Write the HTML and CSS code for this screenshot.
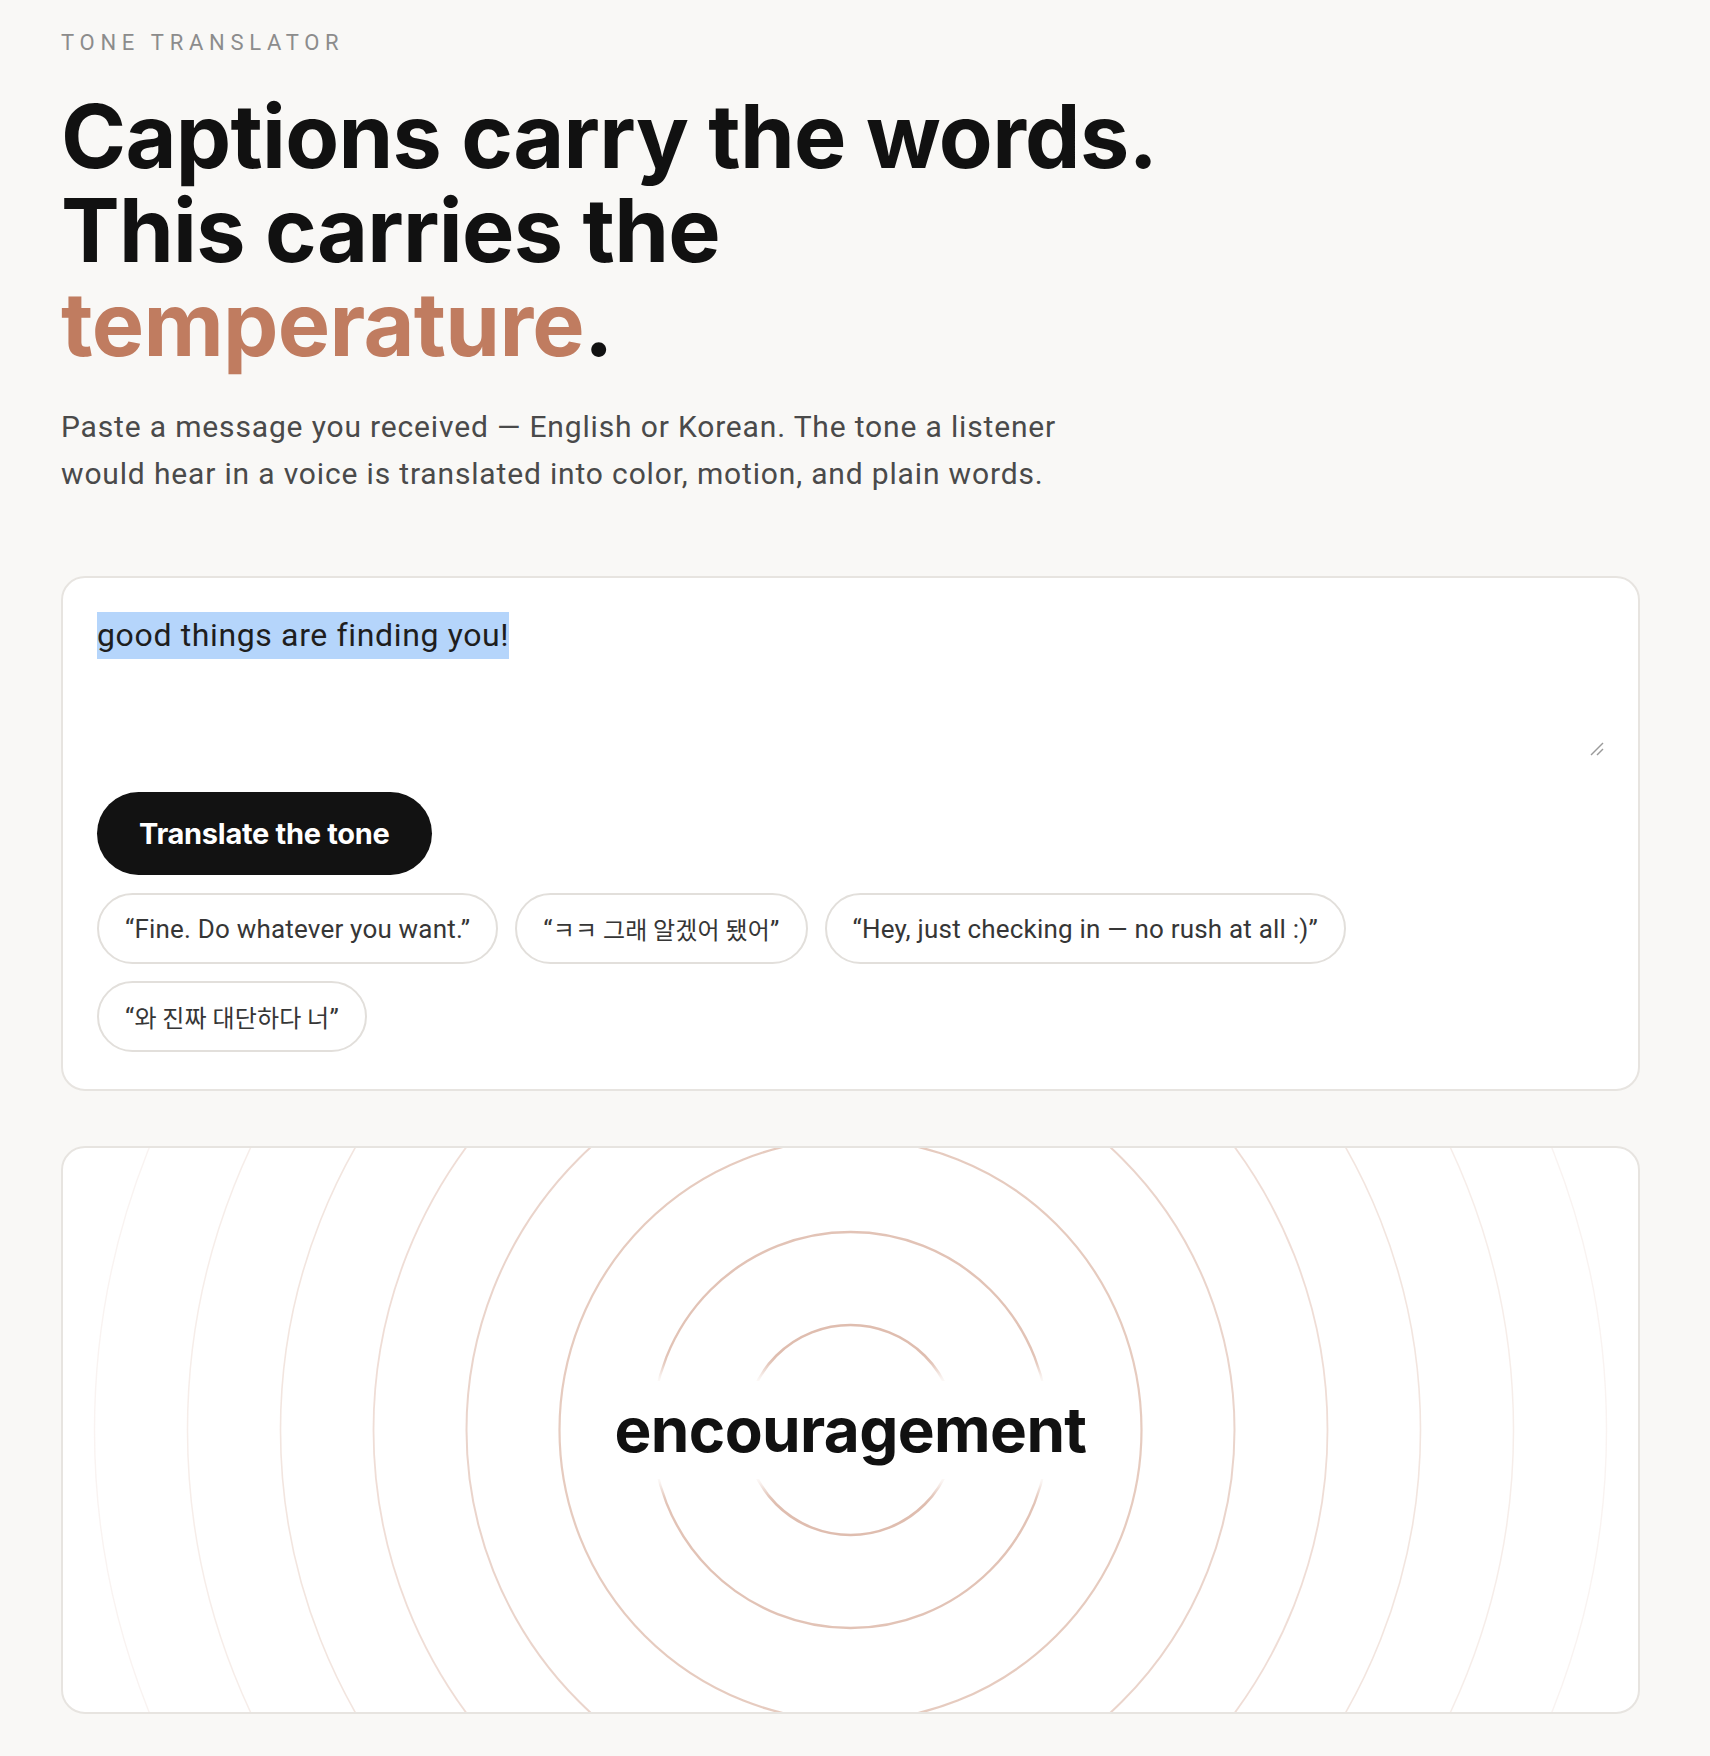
FILE: index.html
```html
<!DOCTYPE html>
<html lang="en">
<head>
<meta charset="utf-8">
<title>Tone Translator</title>
<link rel="stylesheet" href="styles.css">
</head>
<body>
<main class="page">
  <header class="intro">
    <p class="eyebrow">TONE TRANSLATOR</p>
    <h1 class="headline">Captions carry the words.<br>This carries the<br><span class="accent">temperature</span>.</h1>
    <p class="lede">Paste a message you received — English or Korean. The tone a listener<br>would hear in a voice is translated into color, motion, and plain words.</p>
  </header>

  <section class="card composer">
    <div class="message-box">
      <span class="selected">good things are finding you!</span>
      <svg class="grip" width="14" height="14" viewBox="0 0 14 14" aria-hidden="true">
        <line x1="1" y1="13" x2="13" y2="1"></line>
        <line x1="7" y1="13" x2="13" y2="7"></line>
      </svg>
    </div>
    <button class="translate" type="button">Translate the tone</button>
    <div class="examples">
      <button class="chip" type="button">“Fine. Do whatever you want.”</button>
      <button class="chip" type="button">“<span class="ko">ㅋㅋ 그래 알겠어 됐어</span>”</button>
      <button class="chip" type="button">“Hey, just checking in — no rush at all :)”</button>
      <button class="chip" type="button">“<span class="ko">와 진짜 대단하다 너</span>”</button>
    </div>
  </section>

  <section class="card result">
    <svg class="rings" viewBox="0 0 1575 564" preserveAspectRatio="xMidYMid slice" aria-hidden="true">
      <circle class="ring r1" cx="787.5" cy="282" r="105"></circle>
      <circle class="ring r2" cx="787.5" cy="282" r="198"></circle>
      <circle class="ring r3" cx="787.5" cy="282" r="291"></circle>
      <circle class="ring r4" cx="787.5" cy="282" r="384"></circle>
      <circle class="ring r5" cx="787.5" cy="282" r="477"></circle>
      <circle class="ring r6" cx="787.5" cy="282" r="570"></circle>
      <circle class="ring r7" cx="787.5" cy="282" r="663"></circle>
      <circle class="ring r8" cx="787.5" cy="282" r="756"></circle>
    </svg>
    <p class="tone-word">encouragement</p>
  </section>
</main>
</body>
</html>
```

FILE: styles.css
```css
* {
  box-sizing: border-box;
}

body {
  margin: 0;
  background: #f9f8f6;
  font-family: Roboto, "Noto Sans CJK KR", sans-serif;
  color: #111;
}

.page {
  width: 1579px;
  margin-left: 61px;
  padding-top: 28px;
  padding-bottom: 41px;
}

.eyebrow {
  margin: 0;
  font-size: 22px;
  line-height: 30px;
  letter-spacing: 0.26em;
  color: #8c8c8c;
}

.headline {
  margin: 31px 0 0;
  font-family: Inter, "Liberation Sans", sans-serif;
  font-weight: 700;
  font-size: 88px;
  line-height: 94px;
  letter-spacing: -0.008em;
  color: #111;
}

.accent {
  color: #c07c60;
}

.lede {
  margin: 32px 0 0;
  font-size: 30px;
  line-height: 47px;
  letter-spacing: 0.028em;
  color: #4a4a4a;
}

.card {
  background: #fff;
  border: 2px solid #e7e4e0;
  border-radius: 24px;
}

.composer {
  margin-top: 79px;
  padding: 34px 34px 37px;
}

.message-box {
  position: relative;
  height: 144px;
  font-size: 32px;
  line-height: 47px;
  letter-spacing: 0.02em;
  color: #1e1e1e;
}

.selected {
  display: inline-block;
  background: #b5d5fb;
}

.grip {
  position: absolute;
  right: 0;
  bottom: 0;
  stroke: #9a9a9a;
  stroke-width: 1.5;
}

.translate {
  display: block;
  margin-top: 36px;
  height: 83px;
  padding: 0 42px;
  border: 0;
  border-radius: 999px;
  background: #121212;
  color: #fff;
  font-family: Inter, "Liberation Sans", sans-serif;
  font-weight: 700;
  font-size: 29px;
  letter-spacing: -0.01em;
}

.examples {
  display: flex;
  flex-wrap: wrap;
  gap: 17px;
  margin-top: 18px;
}

.chip {
  height: 71px;
  padding: 0 26px;
  border: 2px solid #e2dfdb;
  border-radius: 999px;
  background: #fff;
  font-family: Roboto, "Noto Sans CJK KR", sans-serif;
  font-size: 26px;
  letter-spacing: 0.2px;
  color: #363636;
}

.ko {
  font-family: "Noto Sans CJK KR", sans-serif;
  font-size: 24px;
}

.result {
  position: relative;
  margin-top: 55px;
  height: 568px;
  overflow: hidden;
  display: flex;
  align-items: center;
  justify-content: center;
}

.rings {
  position: absolute;
  inset: 0;
  width: 100%;
  height: 100%;
}

.ring {
  fill: none;
  stroke: #c07c60;
}

.r1 { stroke-opacity: 0.5; stroke-width: 2.6; }
.r2 { stroke-opacity: 0.46; stroke-width: 2.4; }
.r3 { stroke-opacity: 0.4; stroke-width: 2.2; }
.r4 { stroke-opacity: 0.33; stroke-width: 2; }
.r5 { stroke-opacity: 0.26; stroke-width: 1.8; }
.r6 { stroke-opacity: 0.2; stroke-width: 1.6; }
.r7 { stroke-opacity: 0.14; stroke-width: 1.5; }
.r8 { stroke-opacity: 0.09; stroke-width: 1.4; }

.tone-word {
  position: relative;
  margin: 0;
  padding: 12px 8px;
  background: #fff;
  border-radius: 24px;
  box-shadow: 0 0 16px 10px #fff;
  font-family: Inter, "Liberation Sans", sans-serif;
  font-weight: 700;
  font-size: 62px;
  line-height: 74px;
  letter-spacing: -0.01em;
  color: #111;
}
```
